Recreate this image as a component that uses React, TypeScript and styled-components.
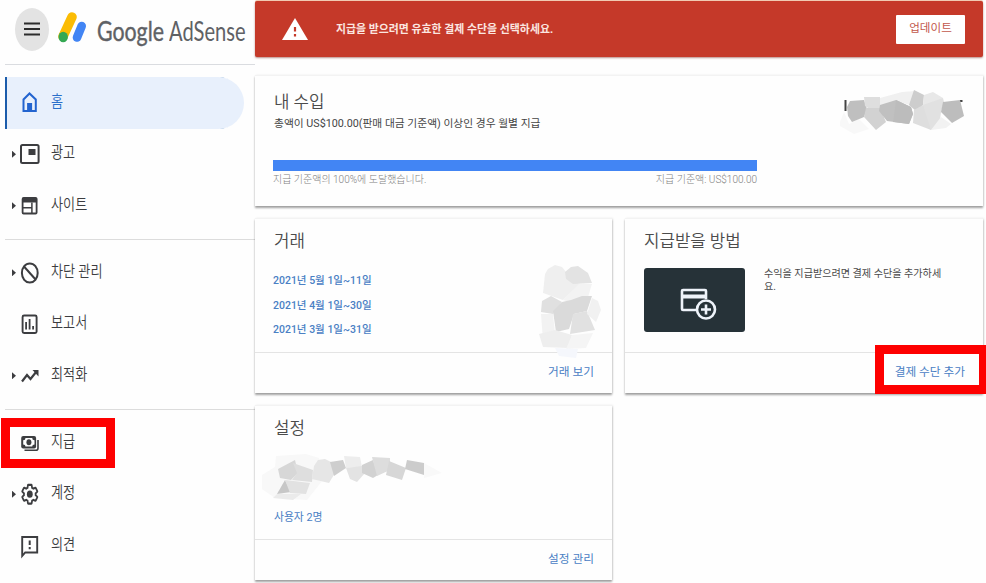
import React from "react";
import styled, { createGlobalStyle, css } from "styled-components";

const GlobalStyle = createGlobalStyle`
  *, *::before, *::after { box-sizing: border-box; }
  body {
    margin: 0;
    background: #fefefe;
    font-family: Roboto, "Noto Sans CJK KR", sans-serif;
  }
`;

const INK = "#3c3d40";
const LINK = "#4a80c4";

const Page = styled.div`
  display: flex;
  width: 986px;
  height: 583px;
  overflow: hidden;
  background: #fefefe;
`;

/* ---------- sidebar ---------- */

const Sidebar = styled.aside`
  width: 255px;
  flex: none;
  padding-left: 5px;
`;

const BrandBar = styled.header`
  display: flex;
  align-items: flex-start;
  height: 65px;
  border-bottom: 1px solid #dadce0;
`;

const MenuButton = styled.button`
  display: flex;
  align-items: center;
  justify-content: center;
  width: 34px;
  height: 43px;
  margin: 8px 0 0 10px;
  padding: 0 0 1px;
  border: 0;
  border-radius: 50%;
  background: #e3e3e3;
`;

const Logo = styled.svg`
  width: 30px;
  height: 34px;
  margin: 10px 0 0 9px;
  flex: none;
`;

const Wordmark = styled.div`
  display: flex;
  margin: 14px 0 0 9px;
  width: 149px;
  font-family: Lato, sans-serif;
  font-size: 27px;
  line-height: 34px;
  color: #5f6165;
`;

const Word = styled.span<{ $width: number; $scale: number; $heavy?: boolean }>`
  width: ${(p) => p.$width}px;
  flex: none;
  white-space: nowrap;
  transform: scaleX(${(p) => p.$scale});
  transform-origin: left;
  ${(p) => p.$heavy && css`-webkit-text-stroke: 0.4px currentColor;`}
`;

const Nav = styled.nav`
  padding-top: 12px;
`;

const NavGroup = styled.div`
  & + & {
    margin-top: 7.5px;
    padding-top: 7px;
    border-top: 1px solid #dcdcdc;
  }
`;

const NavItem = styled.a<{ $active?: boolean }>`
  position: relative;
  display: flex;
  align-items: center;
  width: 239px;
  height: 51.5px;
  color: ${(p) => (p.$active ? "#2a6fca" : INK)};
  ${(p) =>
    p.$active &&
    css`
      background: #e8f0fc;
      border-radius: 0 26px 26px 0;
      box-shadow: inset 2px 0 #1b5cab;
    `}
`;

const Arrow = styled.span<{ $hidden?: boolean }>`
  width: 4px;
  height: 7px;
  margin-left: 7px;
  background: ${INK};
  clip-path: polygon(0 0, 100% 50%, 0 100%);
  visibility: ${(p) => (p.$hidden ? "hidden" : "visible")};
`;

const NavIcon = styled.svg`
  width: 20px;
  height: 24px;
  margin-left: 4.4px;
  overflow: visible;
`;

const NavLabel = styled.span`
  margin: -2px 0 0 10.6px;
  font-size: 16px;
  line-height: 20px;
  font-weight: 350;
  white-space: nowrap;
  transform: scaleX(0.82);
  transform-origin: left;
`;

/* ---------- red annotation frames ---------- */

const NavMark = styled.span`
  position: absolute;
  left: -4px;
  top: 1px;
  width: 114px;
  height: 50px;
  border: 9px solid #fe0000;
`;

const ActionMark = styled.span`
  position: absolute;
  right: -5px;
  top: -8px;
  width: 113px;
  height: 49px;
  border: 9px solid #fe0000;
`;

/* ---------- main column ---------- */

const Main = styled.main`
  width: 728px;
  flex: none;
  padding-top: 1px;
`;

const Banner = styled.section`
  display: flex;
  align-items: center;
  height: 56px;
  padding: 0 18px 0 27px;
  border-radius: 2px;
  background: #c53929;
  box-shadow: 0 1px 2px rgba(120, 30, 20, 0.5), 0 -1px 0 #f5d0b8;
`;

const BannerText = styled.p`
  flex: 1;
  margin: 0 0 2px 28px;
  color: #fbe6e0;
  font-size: 10.9px;
  font-weight: 700;
`;

const UpdateButton = styled.button`
  width: 69px;
  height: 29px;
  padding: 0 0 4px;
  border: 0;
  border-radius: 1px;
  background: #fff;
  color: #c2584c;
  font: 400 11.6px Roboto, "Noto Sans CJK KR", sans-serif;
`;

const cardBase = css`
  background: #fefefe;
  border-top: 1px solid #f3f3f3;
  box-shadow: 0 1.5px 2px rgba(0, 0, 0, 0.36), 1px 0 2px rgba(0, 0, 0, 0.08);
`;

const EarningsCard = styled.section`
  ${cardBase}
  height: 131px;
  margin-top: 18px;
  padding: 14px 18px 0 19px;
`;

const EarningsHead = styled.div`
  display: flex;
  justify-content: space-between;
  height: 70px;
`;

const CardTitle = styled.h2`
  margin: 0;
  color: #4b4b4b;
  font-size: 16.8px;
  line-height: 24px;
  font-weight: 350;
  white-space: nowrap;
`;

const Subtitle = styled.p`
  margin: 2px 0 0;
  color: #454545;
  font-size: 10.75px;
  line-height: 16px;
`;

const Progress = styled.div`
  width: 484px;
  margin-left: -1px;
`;

const ProgressBar = styled.div`
  height: 11px;
  background: #4285f4;
`;

const Captions = styled.div`
  display: flex;
  justify-content: space-between;
  padding-top: 2px;
  color: #808080;
  font-size: 10px;
  line-height: 14px;
  font-weight: 300;
`;

const Grid = styled.div`
  display: grid;
  grid-template-columns: 357px 358px;
  gap: 12px 13px;
  margin-top: 12px;
`;

const Card = styled.section`
  ${cardBase}
  display: flex;
  flex-direction: column;
  height: 175px;
`;

const CardBody = styled.div`
  height: 133px;
  padding: 10px 18px 0 19px;
`;

const CardFooter = styled.footer`
  position: relative;
  display: flex;
  flex: 1;
  justify-content: flex-end;
  padding: 10px 18px 0 0;
  border-top: 1px solid #e4e4e4;
`;

const FooterLink = styled.a`
  color: ${LINK};
  font-size: 11.7px;
  line-height: 18px;
`;

const Split = styled.div`
  display: flex;
  justify-content: space-between;
`;

const PeriodList = styled.div`
  display: flex;
  flex-direction: column;
  gap: 8.5px;
  margin: 20px 0 0 -1px;
`;

const PeriodLink = styled.a`
  color: ${LINK};
  font-size: 10.5px;
  line-height: 16px;
  font-weight: 500;
`;

const UsersLink = styled.a`
  display: block;
  color: ${LINK};
  font-size: 10.8px;
  line-height: 16px;
`;

const MethodRow = styled.div`
  display: flex;
  gap: 19px;
  padding-top: 15px;
`;

const MethodTile = styled.div`
  display: flex;
  align-items: center;
  justify-content: center;
  width: 101px;
  height: 64px;
  flex: none;
  padding: 7px 0 0 7px;
  border-radius: 3px;
  background: #263238;
`;

const MethodText = styled.p`
  width: 184px;
  margin: -1px 0 0;
  color: #4a4a4a;
  font-size: 10.1px;
  line-height: 13px;
  word-break: break-all;
`;

const EarningsMask = styled.svg`
  width: 130px;
  height: 52px;
  margin: -5px -1px 0 0;
`;

const BalanceMask = styled.svg`
  position: relative;
  z-index: 1;
  width: 66px;
  height: 98px;
  margin: 32px -10px -21px 0;
`;

const NameMask = styled.svg`
  display: block;
  width: 190px;
  height: 52px;
  margin: 13px 0 5px -13px;
`;

type Cell = [string, string];

/* Shaded facets that cover private values. */
const Facets = ({ cells }: { cells: Cell[] }) => (
  <>
    {cells.map(([points, fill]) => (
      <polygon key={points} points={points} fill={fill} />
    ))}
  </>
);

const earningsCells: Cell[] = [
  ["8,37 12,27 17,39 27,34 37,44 22,49 8,41", "#f8f8f8"],
  ["15,22 18,16 32,15 35,24 32,32 20,37 16,31", "#bfbfbf"],
  ["32,12 48,12 48,23 39,25 33,21", "#dedede"],
  ["48,13 70,7 84,6 78,20 64,16 48,21", "#f0f0f0"],
  ["34,23 48,23 54,37 44,45 32,32", "#d2d2d2"],
  ["48,20 64,15 79,22 81,29 77,39 55,36 47,26", "#c0c0c0"],
  ["64,15 79,22 81,29 77,39 61,37", "#bcbcbc"],
  ["82,5 92,10 91,20 84,26 77,20", "#cdcdcd"],
  ["92,10 101,7 111,13 108,27 91,20", "#e8e8e8"],
  ["82,25 91,20 103,28 108,35 99,45 81,38", "#dedede"],
  ["91,20 111,13 112,17 109,27 108,35 99,45", "#e1e1e1"],
  ["111,17 128,15 132,31 120,38 109,27", "#bdbdbd"],
  ["99,45 109,32 119,39 114,43", "#f2f2f2"],
];

const balanceCells: Cell[] = [
  ["7,13 10,8 17,4 24,6 28,11 28,18 42,23 25,39 5,32", "#efefef"],
  ["27,11 33,6 40,5 50,12 54,22 35,23 28,18", "#e3e3e3"],
  ["41,23 54,23 50,36 31,41 25,39", "#f3f3f3"],
  ["4,40 13,35 24,41 15,53 3,51", "#e0e0e0"],
  ["24,41 33,39 44,35 54,35 49,50 36,53 31,68 18,71 15,50", "#dadada"],
  ["35,53 49,50 57,69 32,73", "#e1e1e1"],
  ["54,37 60,40 63,49 58,61 49,53", "#f1f1f1"],
  ["3,53 15,53 17,72 5,80", "#f2f2f2"],
  ["1,73 17,69 34,74 30,87 5,86", "#eeeeee"],
  ["34,74 55,72 48,87 28,88", "#f5f5f5"],
  ["17,87 40,88 38,97 21,95", "#f5f7fc"],
];

const nameCells: Cell[] = [
  ["1,22 14,14 15,3 45,1 58,5 61,28 46,47 14,45 1,36", "#f8f8f8"],
  ["17,16 34,7 37,20 30,27 19,25", "#d7d7d7"],
  ["32,10 52,17 51,29 31,27 36,20", "#dedede"],
  ["53,13 57,7 64,6 70,9 74,20 68,30 51,26", "#e6e6e6"],
  ["69,9 82,7 85,15 73,23", "#cecece"],
  ["83,3 99,4 101,14 85,15", "#ededed"],
  ["85,15 101,13 104,20 96,29 89,26", "#e3e3e3"],
  ["101,12 112,7 117,22 112,25 101,20", "#d2d2d2"],
  ["111,4 129,5 129,17 116,23", "#dddddd"],
  ["128,8 145,15 141,27 125,22", "#d7d7d7"],
  ["146,7 163,10 163,22 144,16", "#cccccc"],
  ["163,10 181,20 163,25", "#f9f9f9"],
  ["16,41 24,27 30,39", "#c7c7c7"],
  ["24,27 49,30 45,41 29,40", "#e2e2e2"],
  ["12,45 16,41 40,41 32,47", "#ebebeb"],
];

const gearPath =
  "M19.43 12.98c.04-.32.07-.64.07-.98 0-.34-.03-.66-.07-.98l2.11-1.65c.19-.15.24-.42.12-.64l-2-3.46c-.09-.16-.26-.25-.44-.25-.06 0-.12.01-.17.03l-2.49 1c-.52-.4-1.08-.73-1.69-.98l-.38-2.65C14.46 2.18 14.25 2 14 2h-4c-.25 0-.46.18-.49.42l-.38 2.65c-.61.25-1.17.59-1.69.98l-2.49-1c-.06-.02-.12-.03-.18-.03-.17 0-.34.09-.43.25l-2 3.46c-.13.22-.07.49.12.64l2.11 1.65c-.04.32-.07.65-.07.98 0 .33.03.66.07.98l-2.11 1.65c-.19.15-.24.42-.12.64l2 3.46c.09.16.26.25.44.25.06 0 .12-.01.17-.03l2.49-1c.52.4 1.08.73 1.69.98l.38 2.65c.03.24.24.42.49.42h4c.25 0 .46-.18.49-.42l.38-2.65c.61-.25 1.17-.59 1.69-.98l2.49 1c.06.02.12.03.18.03.17 0 .34-.09.43-.25l2-3.46c.12-.22.07-.49-.12-.64l-2.11-1.65z";

const icons: Record<string, React.ReactNode> = {
  home: (
    <>
      <path d="M3.500 20V8.500l6-6 6.300 6v11.500z" fill="none" stroke="#2364cf" strokeWidth="2" />
      <path d="M7.100 12h5v8h-5z" fill="#2364cf" />
    </>
  ),
  ads: (
    <>
      <rect x="1" y="3" width="17.600" height="18" rx="1.500" fill="none" stroke={INK} strokeWidth="2" />
      <rect x="8.500" y="7" width="7" height="6" fill={INK} />
    </>
  ),
  sites: (
    <>
      <rect x="2.600" y="4" width="14" height="15.500" rx="1" fill="none" stroke={INK} strokeWidth="1.800" />
      <path d="M2.100 4h15v4.500h-15z" fill={INK} />
      <path d="M2.600 13.800h9M11.900 8.500v11" stroke={INK} strokeWidth="1.500" />
    </>
  ),
  block: (
    <>
      <ellipse cx="9.800" cy="12" rx="7.900" ry="9.600" fill="none" stroke={INK} strokeWidth="2" />
      <path d="M4 5.500l11.600 13" stroke={INK} strokeWidth="2" />
    </>
  ),
  report: (
    <>
      <rect x="2.600" y="3.500" width="14" height="17.500" rx="1.500" fill="none" stroke={INK} strokeWidth="1.900" />
      <path d="M6.100 10V17.500M9.600 7V17.500M13.100 14V17.500" stroke={INK} strokeWidth="1.800" />
    </>
  ),
  trend: (
    <>
      <path d="M2 17.500l5-6.500 3.500 4 6-7.500" fill="none" stroke={INK} strokeWidth="2.200" />
      <path d="M12.500 6h6v6.500z" fill={INK} />
    </>
  ),
  pay: (
    <>
      <path d="M4.500 19.300h11.500q2 0 2-2V9" fill="none" stroke={INK} strokeWidth="1.600" />
      <rect x="1.200" y="5" width="14.900" height="12.600" rx="2" fill={INK} />
      <path d="M5.500 7h6.700q0 2.200 2.300 2.200v4.200q-2.300 0-2.300 2.200H5.500q0-2.200-2.300-2.200V9.200q2.300 0 2.300-2.200z" fill="#fefefe" />
      <ellipse cx="8.900" cy="11.300" rx="2.500" ry="3" fill={INK} />
    </>
  ),
  account: (
    <>
      <g transform="translate(-0.4 0) scale(0.85 1.02)">
        <path d={gearPath} transform="translate(1 1) scale(.917)" fill="none" stroke={INK} strokeWidth="2.200" />
      </g>
      <ellipse cx="9.800" cy="12.200" rx="2.900" ry="3.600" fill={INK} />
    </>
  ),
  feedback: (
    <>
      <path d="M2.200 3h15v15.500H5.200l-3 3.500z" fill="none" stroke={INK} strokeWidth="1.900" />
      <path d="M9.700 6.500v4.500M9.700 13v2.300" stroke={INK} strokeWidth="2" />
    </>
  ),
};

interface Entry {
  icon: string;
  label: string;
  arrow?: boolean;
  active?: boolean;
  marked?: boolean;
}

const groups: Entry[][] = [
  [
    { icon: "home", label: "홈", active: true },
    { icon: "ads", label: "광고", arrow: true },
    { icon: "sites", label: "사이트", arrow: true },
  ],
  [
    { icon: "block", label: "차단 관리", arrow: true },
    { icon: "report", label: "보고서" },
    { icon: "trend", label: "최적화", arrow: true },
  ],
  [
    { icon: "pay", label: "지급", marked: true },
    { icon: "account", label: "계정", arrow: true },
    { icon: "feedback", label: "의견" },
  ],
];

const periods = ["2021년 5월 1일~11일", "2021년 4월 1일~30일", "2021년 3월 1일~31일"];

export default function App() {
  return (
    <>
      <GlobalStyle />
      <Page>
        <Sidebar>
          <BrandBar>
            <MenuButton aria-label="메뉴">
              <svg width="16" height="14" viewBox="0 0 16 14">
                <path d="M0 1.500h16M0 7h16M0 12.500h16" stroke="#2c2c2c" strokeWidth="1.900" />
              </svg>
            </MenuButton>
            <Logo viewBox="0 0 30 34">
              <path d="M14 7L5 26.500" stroke="#fbbc04" strokeWidth="9.500" strokeLinecap="round" />
              <path d="M23.700 16L19 27.500" stroke="#4285f4" strokeWidth="8.600" strokeLinecap="round" />
              <ellipse cx="5.200" cy="27" rx="4.700" ry="5.300" fill="#34a853" />
            </Logo>
            <Wordmark>
              <Word $width={72} $scale={0.79} $heavy>Google</Word>
              <Word $width={77} $scale={0.745}>AdSense</Word>
            </Wordmark>
          </BrandBar>
          <Nav>
            {groups.map((group) => (
              <NavGroup key={group[0].icon}>
                {group.map((item) => (
                  <NavItem key={item.icon} $active={item.active}>
                    <Arrow $hidden={!item.arrow} />
                    <NavIcon viewBox="0 0 20 24">{icons[item.icon]}</NavIcon>
                    <NavLabel>{item.label}</NavLabel>
                    {item.marked && <NavMark />}
                  </NavItem>
                ))}
              </NavGroup>
            ))}
          </Nav>
        </Sidebar>

        <Main>
          <Banner>
            <svg width="26" height="22" viewBox="0 0 26 22">
              <path d="M13 0l13 22H0z" fill="#fff" />
              <path d="M13 9v4.500M13 16v2.500" stroke="#c53929" strokeWidth="2.200" />
            </svg>
            <BannerText>지급을 받으려면 유효한 결제 수단을 선택하세요.</BannerText>
            <UpdateButton>업데이트</UpdateButton>
          </Banner>

          <EarningsCard>
            <EarningsHead>
              <div>
                <CardTitle>내 수입</CardTitle>
                <Subtitle>총액이 US$100.00(판매 대금 기준액) 이상인 경우 월별 지급</Subtitle>
              </div>
              <EarningsMask viewBox="4 0 130 52">
                <path d="M12.500 15h2v11h-2zM128 15h2.500v2h-2.500z" fill="#444" />
                <Facets cells={earningsCells} />
              </EarningsMask>
            </EarningsHead>
            <Progress>
              <ProgressBar />
              <Captions>
                <span>지급 기준액의 100%에 도달했습니다.</span>
                <span>지급 기준액: US$100.00</span>
              </Captions>
            </Progress>
          </EarningsCard>

          <Grid>
            <Card>
              <CardBody>
                <Split>
                  <div>
                    <CardTitle>거래</CardTitle>
                    <PeriodList>
                      {periods.map((p) => (
                        <PeriodLink key={p}>{p}</PeriodLink>
                      ))}
                    </PeriodList>
                  </div>
                  <BalanceMask viewBox="0 0 66 98">
                    <Facets cells={balanceCells} />
                  </BalanceMask>
                </Split>
              </CardBody>
              <CardFooter>
                <FooterLink>거래 보기</FooterLink>
              </CardFooter>
            </Card>

            <Card>
              <CardBody>
                <CardTitle>지급받을 방법</CardTitle>
                <MethodRow>
                  <MethodTile>
                    <svg width="38" height="32" viewBox="0 0 38 32">
                      <g fill="none" stroke="#eef3fa" strokeWidth="2.600">
                        <path d="M27 11V3q0-1-1-1H4Q3 2 3 3v18q0 1 1 1h13" />
                        <path d="M3 8.500h24" strokeWidth="4" />
                        <circle cx="27" cy="21.500" r="9" fill="#263238" />
                        <path d="M27 16.500v10M22 21.500h10" />
                      </g>
                    </svg>
                  </MethodTile>
                  <MethodText>수익을 지급받으려면 결제 수단을 추가하세요.</MethodText>
                </MethodRow>
              </CardBody>
              <CardFooter>
                <FooterLink>결제 수단 추가</FooterLink>
                <ActionMark />
              </CardFooter>
            </Card>

            <Card>
              <CardBody>
                <CardTitle>설정</CardTitle>
                <NameMask viewBox="0 0 190 52">
                  <Facets cells={nameCells} />
                </NameMask>
                <UsersLink>사용자 2명</UsersLink>
              </CardBody>
              <CardFooter>
                <FooterLink>설정 관리</FooterLink>
              </CardFooter>
            </Card>
          </Grid>
        </Main>
      </Page>
    </>
  );
}
